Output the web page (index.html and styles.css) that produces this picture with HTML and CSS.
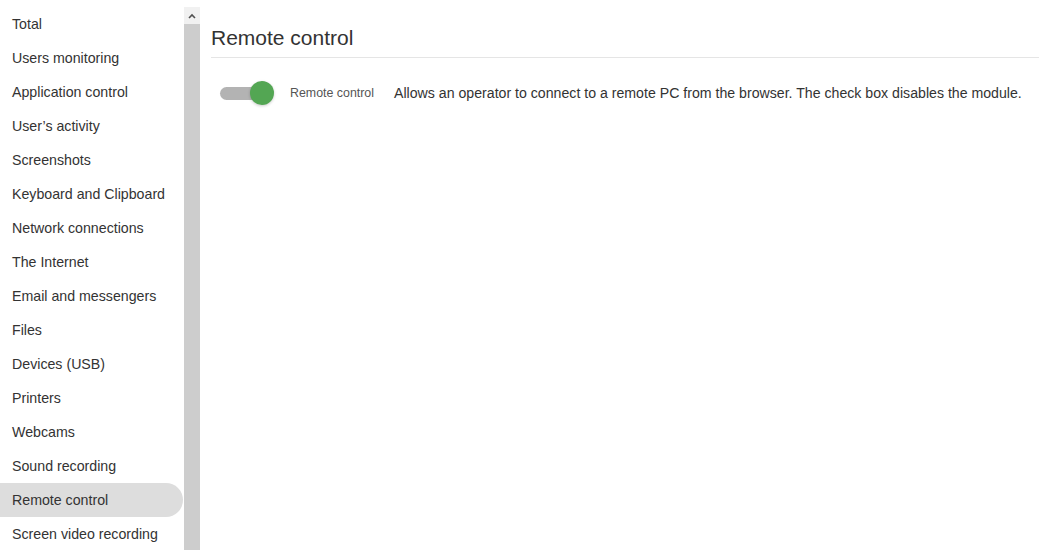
FILE: index.html
```html
<!DOCTYPE html>
<html lang="en">
<head>
    <meta charset="UTF-8">
    <title>Remote control</title>
    <link rel="stylesheet" href="styles.css">
</head>
<body>
    <div class="layout">
        <!-- Sidebar -->
        <div class="sidebar">
            <ul class="menu">
                <li>Total</li>
                <li>Users monitoring</li>
                <li>Application control</li>
                <li>User’s activity</li>
                <li>Screenshots</li>
                <li>Keyboard and Clipboard</li>
                <li>Network connections</li>
                <li>The Internet</li>
                <li>Email and messengers</li>
                <li>Files</li>
                <li>Devices (USB)</li>
                <li>Printers</li>
                <li>Webcams</li>
                <li>Sound recording</li>
                <li class="active">Remote control</li>
                <li>Screen video recording</li>
            </ul>
            <div class="scrollbar">
                <div class="scroll-up">
                    <svg width="8" height="6" viewBox="0 0 8 6"><polyline points="1,5 4,2 7,5" fill="none" stroke="#505050" stroke-width="1.6"/></svg>
                </div>
                <div class="scroll-thumb"></div>
            </div>
        </div>

        <!-- Content -->
        <div class="content">
            <h1>Remote control</h1>
            <div class="setting">
                <div class="toggle">
                    <span class="track"></span>
                    <span class="knob"></span>
                </div>
                <span class="setting-label">Remote control</span>
                <span class="setting-desc">Allows an operator to connect to a remote PC from the browser. The check box disables the module.</span>
            </div>
        </div>
    </div>
</body>
</html>
```

FILE: styles.css
```css
/* General */
body {
    margin: 0;
    font-family: 'Liberation Sans', Arial, sans-serif;
    color: #333;
    background: #fff;
    overflow: hidden;
}

.layout {
    display: flex;
    height: 100vh;
}

/* Sidebar */
.sidebar {
    display: flex;
    padding-top: 7px;
    flex-shrink: 0;
    overflow: hidden;
}

.menu {
    list-style: none;
    margin: 0;
    padding: 0;
    width: 184px;
}

.menu li {
    height: 34px;
    line-height: 34px;
    padding-left: 12px;
    font-size: 14.2px;
    color: #333;
    white-space: nowrap;
    margin-right: 1px;
}

.menu li.active {
    background: #dddddd;
    border-radius: 0 17px 17px 0;
}

.scrollbar {
    width: 16px;
    display: flex;
    flex-direction: column;
}

.scroll-up {
    height: 17px;
    background: #f1f1f1;
    display: flex;
    align-items: center;
    justify-content: center;
}

.scroll-thumb {
    flex: 1;
    background: #cdcdcd;
}

/* Content */
.content {
    flex: 1;
    padding: 26px 0 0 11px;
}

.content h1 {
    margin: 0;
    font-size: 21px;
    font-weight: normal;
    line-height: 24px;
    padding-bottom: 7px;
    border-bottom: 1px solid #e5e5e5;
    color: #333;
}

.setting {
    display: flex;
    align-items: center;
    margin-top: 23px;
    padding-left: 9px;
}

.toggle {
    position: relative;
    width: 54px;
    height: 24px;
    flex-shrink: 0;
}

.track {
    position: absolute;
    left: 0;
    top: 6px;
    width: 48px;
    height: 13px;
    border-radius: 7px;
    background: #b3b3b3;
}

.knob {
    position: absolute;
    right: 0;
    top: 0;
    width: 24px;
    height: 24px;
    border-radius: 50%;
    background: #53a653;
    box-shadow: 0 1px 3px rgba(0, 0, 0, 0.2);
}

.setting-label {
    margin-left: 16px;
    font-size: 12.4px;
    color: #555;
}

.setting-desc {
    margin-left: 20px;
    font-size: 14.15px;
    color: #333;
}
```
